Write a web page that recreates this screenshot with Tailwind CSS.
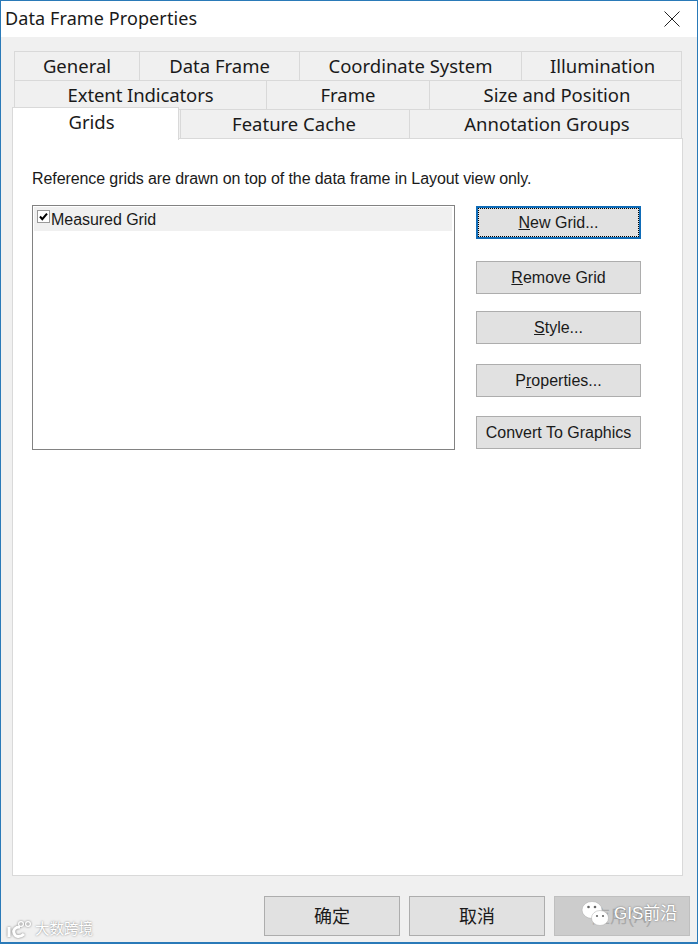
<!DOCTYPE html>
<html lang="en">
<head>
<meta charset="UTF-8">
<title>Data Frame Properties</title>
<script src="https://cdn.jsdelivr.net/npm/@tailwindcss/browser@4"></script>
</head>
<body class="bg-white">
<div class="relative w-[698px] h-[944px] flex flex-col border border-[#2a7ab8] border-b-[2px] bg-[#f0f0f0] overflow-hidden font-['Liberation_Sans','Noto_Sans_CJK_SC',sans-serif] text-[16px] text-[#1a1a1a]">

  <!-- title bar -->
  <div class="h-[36px] shrink-0 bg-white flex items-center justify-between pl-[4px] pr-[17px]">
    <span class="font-['Noto_Sans',sans-serif] text-[18px] tracking-[0.1px] -translate-y-[1px]">Data Frame Properties</span>
    <svg width="16" height="16" viewBox="0 0 16 16" fill="none" stroke="#222" stroke-width="1"><path d="M0.5 0.5 15.5 15.5M15.5 0.5 0.5 15.5"/></svg>
  </div>

  <!-- tabs -->
  <div class="flex flex-col pt-[14px] pl-[13px] font-['Noto_Sans',sans-serif] text-[18.5px] leading-[28px]">
    <div class="flex h-[29px] w-[668px] border-t border-r border-[#d9d9d9]">
      <div class="w-[125px] text-center border-l border-[#d9d9d9]">General</div>
      <div class="w-[160px] text-center border-l border-[#d9d9d9]">Data Frame</div>
      <div class="w-[222px] text-center border-l border-[#d9d9d9]">Coordinate System</div>
      <div class="flex-1 text-center border-l border-[#d9d9d9] pl-[2px]">Illumination</div>
    </div>
    <div class="flex h-[29px] w-[668px] border-t border-r border-[#d9d9d9]">
      <div class="w-[252px] text-center border-l border-[#d9d9d9] tracking-[-0.1px]">Extent Indicators</div>
      <div class="w-[163px] text-center border-l border-[#d9d9d9]">Frame</div>
      <div class="flex-1 text-center border-l border-[#d9d9d9] pl-[3px]">Size and Position</div>
    </div>
    <div class="flex h-[29px] w-[668px] border-t border-r border-[#d9d9d9]">
      <div class="w-[166px]"></div>
      <div class="w-[229px] text-center border-l border-[#d9d9d9] pr-[2px]">Feature Cache</div>
      <div class="flex-1 text-center border-l border-[#d9d9d9] pl-[3px]">Annotation Groups</div>
    </div>
  </div>

  <!-- panel -->
  <div class="relative ml-[11px] w-[671px] h-[738px] bg-white border border-[#d9d9d9] pl-[19px] pt-[29px]">
    <!-- active tab sits over the panel's top edge -->
    <div class="absolute left-[-1px] top-[-32px] w-[167px] h-[33px] bg-white border border-b-0 border-[#d9d9d9] pr-[8px] text-center font-['Noto_Sans',sans-serif] text-[18.5px] leading-[28px]">Grids</div>

    <p class="leading-[22px] tracking-[-0.09px]">Reference grids are drawn on top of the data frame in Layout view only.</p>

    <div class="flex mt-[15px]">
      <div class="w-[423px] h-[245px] border border-[#828282] p-[1px] pr-[2px]">
        <div class="h-[24px] bg-[#f0f0f0] flex items-center pl-[3px] gap-[1px]">
          <svg class="mb-[6px] shrink-0" width="13" height="13" viewBox="0 0 13 13"><rect x="0.5" y="0.5" width="12" height="12" fill="#fff" stroke="#9a9a9a"/><path d="M3 6.5 5.3 9.2 10 3.6" fill="none" stroke="#000" stroke-width="2"/></svg>
          <span class="tracking-[-0.05px] pt-[2px]">Measured Grid</span>
        </div>
      </div>

      <div class="ml-[21px] w-[165px] flex flex-col text-[16px]">
        <button class="mt-[1px] h-[33px] bg-[#e1e1e1] border-2 border-[#0f6cb8] outline-1 outline-dotted -outline-offset-3 outline-black"><u>N</u>ew Grid...</button>
        <button class="mt-[22px] h-[33px] bg-[#e1e1e1] border border-[#adadad]"><u>R</u>emove Grid</button>
        <button class="mt-[17px] h-[33px] bg-[#e1e1e1] border border-[#adadad]"><u>S</u>tyle...</button>
        <button class="mt-[20px] h-[33px] bg-[#e1e1e1] border border-[#adadad]">P<u>r</u>operties...</button>
        <button class="mt-[19px] h-[33px] bg-[#e1e1e1] border border-[#adadad]">Convert To Graphics</button>
      </div>
    </div>
  </div>

  <!-- footer buttons -->
  <div class="flex justify-end gap-[9px] mt-[20px] pr-[7px] text-[18px]">
    <button class="w-[136px] h-[40px] bg-[#e1e1e1] border border-[#adadad] pt-[2px]">确定</button>
    <button class="w-[136px] h-[40px] bg-[#e1e1e1] border border-[#adadad] pt-[2px]">取消</button>
    <button class="w-[136px] h-[40px] bg-[#cccccc] border border-[#bfbfbf] text-[#aaaaaa] pt-[2px]">应用(A)</button>
  </div>

  <!-- image watermarks -->
  <div class="absolute left-[6px] bottom-[1px] flex items-center gap-[1px] text-[14.5px] text-white [text-shadow:0_0_2px_#777]">
    <svg width="27" height="20" viewBox="0 0 27 20" fill="none" stroke="#fff" class="drop-shadow-[0_0_1px_#777]"><path d="M2 7V17" stroke-width="3"/><path d="M13 7C8 7 6 10 7 13 8 17 13 18 17 14" stroke-width="3"/><circle cx="14" cy="4" r="2.4" stroke-width="1.2"/><circle cx="21" cy="4" r="2.4" stroke-width="1.2"/></svg>
    <span>大数跨境</span>
  </div>
  <div class="absolute left-[580px] top-[899px] flex items-center gap-[2px] text-[17px] text-white [text-shadow:0_0_2px_#666]">
    <svg width="31" height="28" viewBox="0 0 31 28"><ellipse cx="11" cy="10" rx="10" ry="8.5" fill="#fff" stroke="#aaa" stroke-width="0.5"/><ellipse cx="19" cy="18" rx="8.5" ry="7.5" fill="#fff" stroke="#aaa" stroke-width="0.5"/><circle cx="7.5" cy="7" r="1.3" fill="#666"/><circle cx="14" cy="7" r="1.3" fill="#666"/><circle cx="16" cy="16" r="1.1" fill="#666"/><circle cx="22" cy="16" r="1.1" fill="#666"/></svg>
    <span>GIS前沿</span>
  </div>
</div>
</body>
</html>
